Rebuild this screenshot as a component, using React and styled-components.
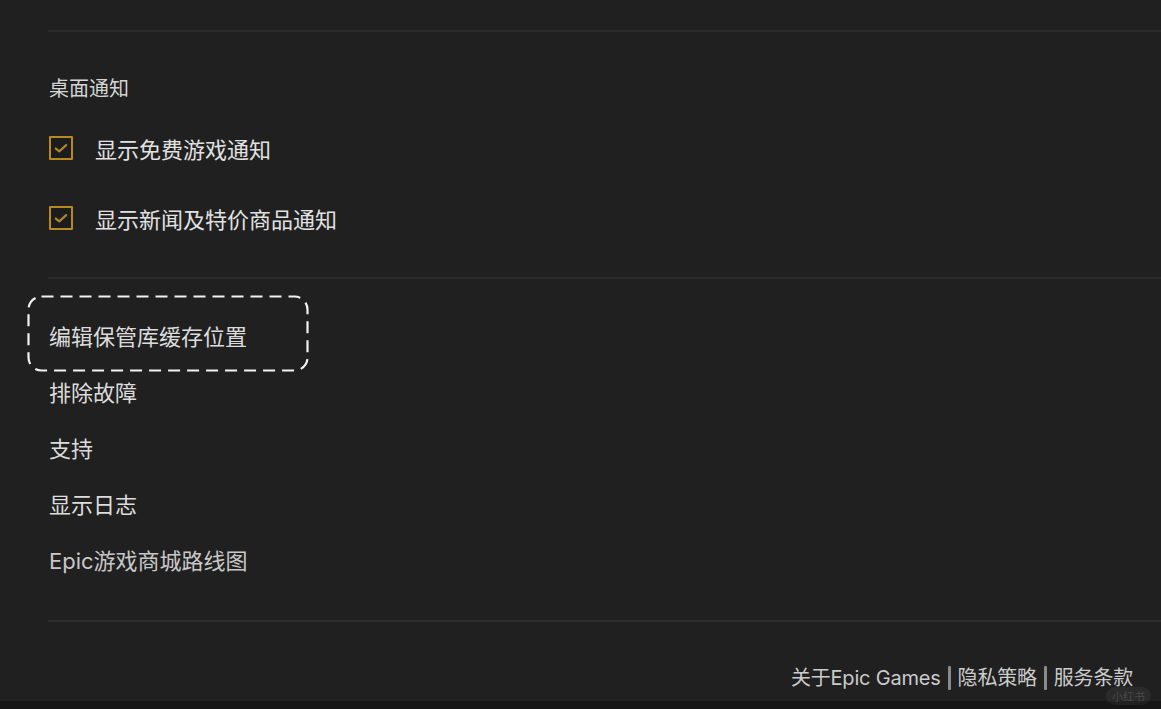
import styled, { createGlobalStyle } from "styled-components";

const GlobalStyle = createGlobalStyle`
  html, body {
    margin: 0;
    padding: 0;
    background: #202020;
  }
  body {
    font-family: "Inter", "Noto Sans CJK SC", "Noto Sans", sans-serif;
    -webkit-font-smoothing: antialiased;
  }
`;

const Page = styled.main`
  position: relative;
  width: 1161px;
  height: 709px;
  overflow: hidden;
  background: #202020;
  display: flex;
  flex-direction: column;
  padding-left: 48px;
  box-sizing: border-box;
`;

const Divider = styled.hr`
  margin: ${(p) => p.$top || 0}px 0 0 0;
  border: none;
  height: 2px;
  background: #2b2b2b;
`;

const Section = styled.section`
  display: flex;
  flex-direction: column;
  gap: ${(p) => p.$gap}px;
  padding: ${(p) => p.$pt}px 0 ${(p) => p.$pb}px 1px;
`;

const Heading = styled.h3`
  margin: 0 0 ${(p) => p.$after}px 0;
  font-size: 20px;
  line-height: 24px;
  font-weight: 400;
  color: #d4d4d4;
`;

const CheckRow = styled.label`
  display: flex;
  align-items: center;
  gap: 22px;
  height: 24px;
  font-size: 22px;
  color: #e2e2e2;
  cursor: pointer;
`;

const Box = styled.span`
  display: flex;
  align-items: center;
  justify-content: center;
  width: 24px;
  height: 24px;
  box-sizing: border-box;
  border: 2.5px solid #b8891f;
  border-radius: 1px;
  background: #1c1c1c;
`;

const LinkItem = styled.a`
  position: relative;
  display: block;
  height: 24px;
  line-height: 24px;
  font-size: 22px;
  color: ${(p) => (p.$muted ? "#c8c8c8" : "#dcdcdc")};
  text-decoration: none;
  cursor: pointer;
`;

const Highlight = styled.svg`
  position: absolute;
  left: -22px;
  top: -30px;
  width: 282px;
  height: 77px;
  pointer-events: none;
`;

const Footer = styled.footer`
  display: flex;
  justify-content: flex-end;
  align-items: center;
  gap: 7px;
  padding: 44px 28px 0 0;
  height: 24px;
  font-size: 20px;
  color: #cbcbcb;
`;

const FooterLink = styled.a`
  color: inherit;
  text-decoration: none;
  line-height: 24px;
  letter-spacing: -0.2px;
`;

const Bar = styled.span`
  width: 3px;
  height: 24px;
  background: #8a8a8a;
  border-radius: 1px;
`;

const BottomStrip = styled.div`
  position: absolute;
  left: 0;
  right: 0;
  bottom: 0;
  height: 8px;
  background: #161616;
`;

const Watermark = styled.span`
  position: absolute;
  right: 10px;
  bottom: 4px;
  padding: 1px 6px;
  border-radius: 10px;
  background: rgba(255, 255, 255, 0.05);
  font-size: 11px;
  color: #4a4a4a;
`;

function Check() {
  return (
    <Box>
      <svg width="16" height="16" viewBox="0 0 14 14" fill="none">
        <path
          d="M2.5 7.5 L5.5 10 L11.5 4.5"
          stroke="#a88433"
          strokeWidth="2"
          strokeLinecap="round"
          strokeLinejoin="round"
        />
      </svg>
    </Box>
  );
}

const notices = ["显示免费游戏通知", "显示新闻及特价商品通知"];
const links = ["编辑保管库缓存位置", "排除故障", "支持", "显示日志", "Epic游戏商城路线图"];

export default function App() {
  return (
    <>
      <GlobalStyle />
      <Page>
        <Divider $top={30} />
        <Section $gap={46} $pt={45} $pb={47}>
          <Heading $after={-11}>桌面通知</Heading>
          {notices.map((n) => (
            <CheckRow key={n}>
              <Check />
              {n}
            </CheckRow>
          ))}
        </Section>
        <Divider />
        <Section $gap={32} $pt={46} $pb={47}>
          {links.map((l, i) => (
            <LinkItem key={l} $muted={i === links.length - 1}>
              {l}
              {i === 0 && (
                <Highlight viewBox="0 0 282 77">
                  <rect
                    x="1.5"
                    y="1.5"
                    width="279"
                    height="74"
                    rx="13"
                    fill="none"
                    stroke="#f2f2f2"
                    strokeWidth="2.2"
                    strokeDasharray="12 7"
                  />
                </Highlight>
              )}
            </LinkItem>
          ))}
        </Section>
        <Divider />
        <Footer>
          <FooterLink>关于Epic Games</FooterLink>
          <Bar />
          <FooterLink>隐私策略</FooterLink>
          <Bar />
          <FooterLink>服务条款</FooterLink>
        </Footer>
        <BottomStrip />
        <Watermark>小红书</Watermark>
      </Page>
    </>
  );
}
